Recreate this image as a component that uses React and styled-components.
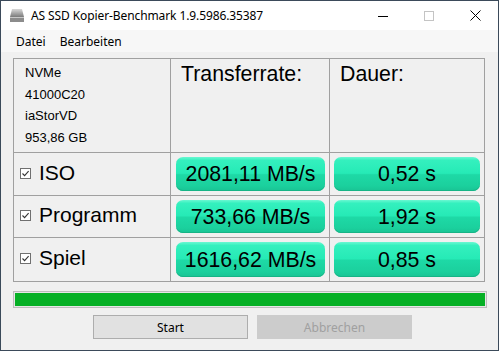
import React from "react";
import styled, { createGlobalStyle } from "styled-components";

const Global = createGlobalStyle`
  html, body { margin: 0; padding: 0; background: #f0f0f0; }
  body { width: 499px; height: 351px; overflow: hidden; }
  * { box-sizing: border-box; }
`;

const Window = styled.div`
  width: 499px;
  height: 351px;
  border: 1px solid #3b4a5a;
  background: #f0f0f0;
  display: flex;
  flex-direction: column;
  font-family: "Noto Sans", "Open Sans", sans-serif;
`;

const TitleBar = styled.div`
  height: 29px;
  background: #ffffff;
  display: flex;
  align-items: center;
  padding-left: 8px;
`;

const TitleText = styled.span`
  margin-left: 6px;
  font-size: 12px;
  color: #000;
  flex: 1;
  letter-spacing: -0.1px;
`;

const Controls = styled.div`
  display: flex;
  height: 100%;
`;

const CtrlBtn = styled.div`
  width: 46px;
  height: 100%;
  display: flex;
  align-items: center;
  justify-content: center;
`;

const MenuBar = styled.div`
  height: 22px;
  background: #f7f7f7;
  display: flex;
  align-items: center;
  padding-left: 8px;
`;

const MenuItem = styled.span`
  font-size: 12px;
  padding: 0 7px;
  color: #000;
`;

const Body = styled.div`
  padding: 6px 12px 0 12px;
  display: flex;
  flex-direction: column;
`;

const Table = styled.div`
  display: grid;
  grid-template-columns: 156px 158px 154px;
  grid-template-rows: 93px 42px 41px 43px;
  gap: 1px;
  padding: 1px;
  background: #a0a0a0;
  width: 472px;
`;

const Cell = styled.div`
  background: #f0f0f0;
  display: flex;
  align-items: ${(p) => (p.$center ? "center" : "flex-start")};
  padding: ${(p) => p.$pad || "0"};
`;

const InfoList = styled.div`
  display: flex;
  flex-direction: column;
  padding: 3px 0 0 11px;
  font-family: "Liberation Sans", Arial, sans-serif;
  font-size: 13px;
  line-height: 21.7px;
  color: #000;
`;

const Heading = styled.div`
  font-family: "Liberation Sans", Arial, sans-serif;
  font-size: 21.3px;
  color: #000;
  padding: 3px 0 0 10px;
`;

const RowLabel = styled.label`
  display: flex;
  align-items: center;
  gap: 8px;
  padding-left: 6px;
  font-family: "Liberation Sans", Arial, sans-serif;
  font-size: 21px;
  color: #000;
  margin-top: -3px;
`;

const Check = styled.span`
  width: 11px;
  height: 11px;
  border: 1px solid #707070;
  background: #fff;
  display: flex;
  align-items: center;
  justify-content: center;
  margin-top: 1px;
`;

const Result = styled.div`
  flex: 1;
  height: 100%;
  border-radius: 7px;
  background: linear-gradient(
    to bottom,
    #6af8d2 0%,
    #34f0be 10%,
    #26eab6 48%,
    #1ed9a6 52%,
    #1bd09d 85%,
    #19c394 100%
  );
  box-shadow: inset 0 -1px 0 #16b486;
  display: flex;
  align-items: center;
  justify-content: center;
  font-family: "Liberation Sans", Arial, sans-serif;
  font-size: 21.3px;
  color: #000;
  padding-top: 1px;
`;

const Progress = styled.div`
  margin-top: 9px;
  width: 474px;
  height: 17px;
  border: 1px solid #bcbcbc;
  background: #e6e6e6;
  padding: 1px;
`;

const ProgressFill = styled.div`
  height: 100%;
  background: #06b025;
`;

const Buttons = styled.div`
  margin-top: 7px;
  display: flex;
  gap: 9px;
  padding-left: 80px;
`;

const Button = styled.div`
  width: 155px;
  height: 24px;
  display: flex;
  align-items: center;
  justify-content: center;
  font-size: 12px;
  border: 1px solid ${(p) => (p.$disabled ? "#cccccc" : "#adadad")};
  background: ${(p) => (p.$disabled ? "#cccccc" : "#e1e1e1")};
  color: ${(p) => (p.$disabled ? "#a0a0a0" : "#000")};
`;

const rows = [
  { name: "ISO", rate: "2081,11 MB/s", time: "0,52 s" },
  { name: "Programm", rate: "733,66 MB/s", time: "1,92 s" },
  { name: "Spiel", rate: "1616,62 MB/s", time: "0,85 s" },
];

const DriveIcon = () => (
  <svg width="16" height="15" viewBox="0 0 16 15">
    <defs>
      <linearGradient id="dg" x1="0" y1="0" x2="0" y2="1">
        <stop offset="0" stopColor="#d8d8d8" />
        <stop offset="1" stopColor="#7a7a7a" />
      </linearGradient>
    </defs>
    <path d="M3 1 H13 L15 9 H1 Z" fill="url(#dg)" />
    <rect x="1" y="9" width="14" height="5" fill="#8c8c8c" />
    <rect x="1" y="9" width="14" height="1" fill="#c8c8c8" />
  </svg>
);

const CheckMark = () => (
  <svg width="9" height="9" viewBox="0 0 9 9">
    <path d="M1.5 4.5 L3.6 6.6 L7.6 2.2" fill="none" stroke="#333" strokeWidth="1.1" />
  </svg>
);

export default function App() {
  return (
    <>
      <Global />
      <Window>
        <TitleBar>
          <DriveIcon />
          <TitleText>AS SSD Kopier-Benchmark 1.9.5986.35387</TitleText>
          <Controls>
            <CtrlBtn>
              <svg width="10" height="10" viewBox="0 0 10 10">
                <path d="M0 5.5 H10" stroke="#000" strokeWidth="1" />
              </svg>
            </CtrlBtn>
            <CtrlBtn>
              <svg width="10" height="10" viewBox="0 0 10 10">
                <rect x="0.5" y="0.5" width="9" height="9" fill="none" stroke="#c4c4c4" strokeWidth="1" />
              </svg>
            </CtrlBtn>
            <CtrlBtn>
              <svg width="11" height="11" viewBox="0 0 11 11">
                <path d="M0.5 0.5 L10.5 10.5 M10.5 0.5 L0.5 10.5" stroke="#000" strokeWidth="1" />
              </svg>
            </CtrlBtn>
          </Controls>
        </TitleBar>
        <MenuBar>
          <MenuItem>Datei</MenuItem>
          <MenuItem>Bearbeiten</MenuItem>
        </MenuBar>
        <Body>
          <Table>
            <Cell>
              <InfoList>
                <span>NVMe</span>
                <span>41000C20</span>
                <span>iaStorVD</span>
                <span>953,86 GB</span>
              </InfoList>
            </Cell>
            <Cell>
              <Heading>Transferrate:</Heading>
            </Cell>
            <Cell>
              <Heading>Dauer:</Heading>
            </Cell>
            {rows.map((r) => (
              <React.Fragment key={r.name}>
                <Cell $center>
                  <RowLabel>
                    <Check>
                      <CheckMark />
                    </Check>
                    {r.name}
                  </RowLabel>
                </Cell>
                <Cell $center $pad="4px 4px 4px 5px">
                  <Result>{r.rate}</Result>
                </Cell>
                <Cell $center $pad="4px 4px 4px 4px">
                  <Result>{r.time}</Result>
                </Cell>
              </React.Fragment>
            ))}
          </Table>
          <Progress>
            <ProgressFill />
          </Progress>
          <Buttons>
            <Button>Start</Button>
            <Button $disabled>Abbrechen</Button>
          </Buttons>
        </Body>
      </Window>
    </>
  );
}
